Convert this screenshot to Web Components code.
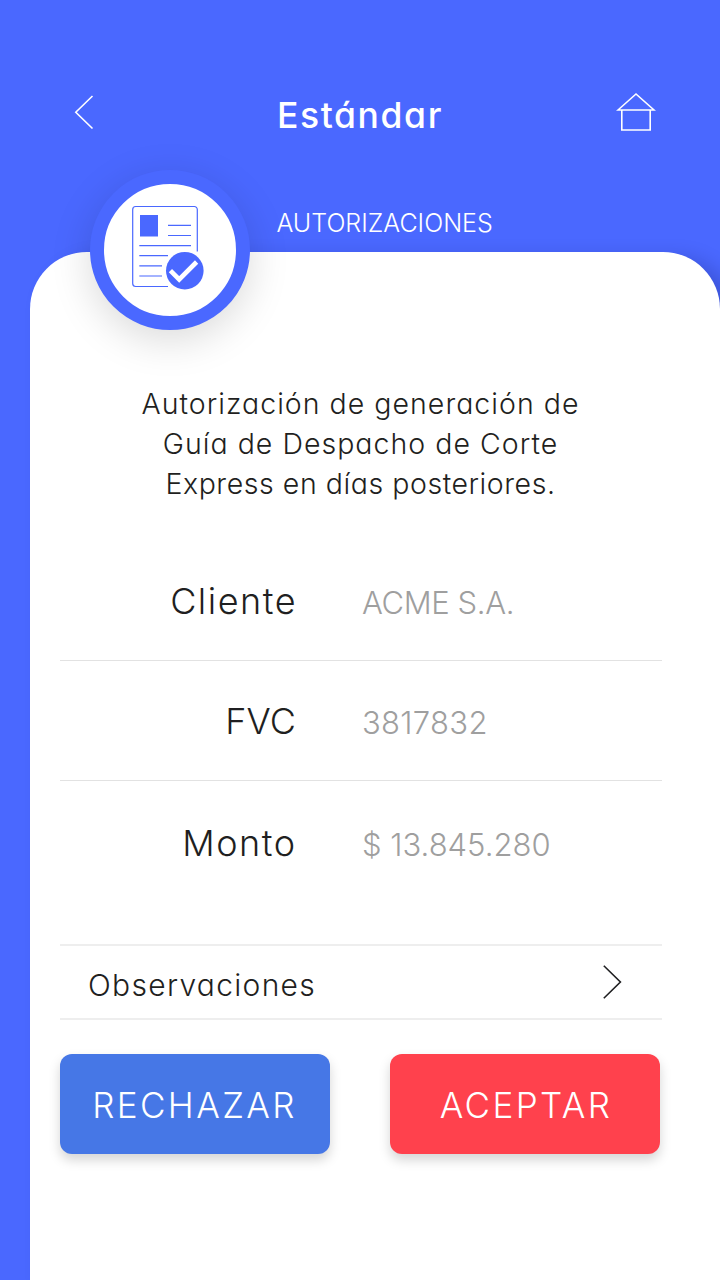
<!DOCTYPE html>
<html lang="es">
<head>
  <meta charset="utf-8">
  <title>Estándar</title>
  <style>
    :root {
      --color-brand: #4a68ff;
      --color-text: #1f1f21;
      --color-muted: #9f9f9f;
      --color-line: #e2e2e2;
    }

    body {
      margin: 0;
      background: var(--color-brand);
      color: var(--color-text);
      font-family: Inter, "Open Sans", sans-serif;
      font-weight: 300;
      font-feature-settings: "cv11";
    }
  </style>
</head>
<body>
  <auth-screen>
    <app-header slot="header" heading="Estándar"></app-header>
    <span slot="section">AUTORIZACIONES</span>
    <doc-badge slot="badge"></doc-badge>
    <auth-message>
      Autorización de generación de<br>
      Guía de Despacho de Corte<br>
      <span style="letter-spacing: 0.55px">Express en días posteriores.</span>
    </auth-message>
    <data-row label="Cliente" style="--value-spacing: -0.4px">ACME S.A.</data-row>
    <data-row label="FVC" style="--label-spacing: 0.1px; --label-shift: 0px; --value-spacing: 0.3px">3817832</data-row>
    <data-row label="Monto" style="--label-shift: -0.5px" last>$ 13.845.280</data-row>
    <nav-row>Observaciones</nav-row>
    <action-bar>
      <action-button>RECHAZAR</action-button>
      <action-button variant="accent">ACEPTAR</action-button>
    </action-bar>
  </auth-screen>

  <script>
    /** <auth-screen> page frame: header, section title, badge and white sheet */
    class AuthScreen extends HTMLElement {
      constructor() {
        super();
        this.attachShadow({ mode: 'open' }).innerHTML = `
          <style>
            :host {
              display: flex;
              flex-direction: column;
              height: 1280px;
              position: relative;
              overflow: hidden;
            }
            .section {
              height: 58px;
              padding-left: 276.5px;
              line-height: 58px;
              font-size: 25px;
              color: #fff;
            }
            .sheet {
              flex: 1;
              margin-left: 30px;
              padding: 132px 59px 0 30px;
              background: #fff;
              border-radius: 57px 57px 0 0;
              box-shadow: 14px 6px 20px rgba(0, 0, 60, 0.2);
            }
            .badge {
              position: absolute;
              left: 90px;
              top: 170px;
            }
          </style>
          <slot name="header"></slot>
          <div class="section"><slot name="section"></slot></div>
          <div class="sheet"><slot></slot></div>
          <div class="badge"><slot name="badge"></slot></div>
        `;
      }
    }

    /** <app-header heading="..."> back arrow, title and home icon */
    class AppHeader extends HTMLElement {
      constructor() {
        super();
        this.attachShadow({ mode: 'open' }).innerHTML = `
          <style>
            :host {
              display: grid;
              grid-template-columns: 40px 1fr 40px;
              align-items: start;
              box-sizing: border-box;
              height: 194px;
              padding: 92px 64px 0 74px;
              color: #fff;
            }
            svg {
              display: block;
              fill: none;
              stroke: currentColor;
              stroke-width: 1.6;
            }
            h1 {
              margin: 0;
              padding-right: 10px;
              font-size: 35.5px;
              font-weight: 500;
              line-height: 47px;
              letter-spacing: 1.6px;
              text-align: center;
            }
          </style>
          <svg width="40" height="40"><path d="M18.5 4 1.8 20.2 18.5 36.5"/></svg>
          <h1></h1>
          <svg width="40" height="40"><path d="M2 18 20 2 38 18ZM5.8 18V38H34.2V18"/></svg>
        `;
      }

      connectedCallback() {
        this.shadowRoot.querySelector('h1').textContent = this.getAttribute('heading');
      }
    }

    /** <doc-badge> round badge with the approved document icon */
    class DocBadge extends HTMLElement {
      constructor() {
        super();
        this.attachShadow({ mode: 'open' }).innerHTML = `
          <style>
            :host {
              display: block;
              box-sizing: border-box;
              width: 160px;
              height: 160px;
              border: 14px solid var(--color-brand);
              border-radius: 50%;
              background: #fff;
              box-shadow: 0 10px 40px rgba(0, 0, 0, 0.15);
              color: var(--color-brand);
            }
            svg {
              display: block;
              fill: none;
              stroke: currentColor;
            }
          </style>
          <svg width="132" height="132" viewBox="104 184 132 132">
            <path stroke-width="1.2" d="M197.3 251.5V209.5a3 3 0 0 0-3-3H135.7a3 3 0 0 0-3 3V283.5a3 3 0 0 0 3 3H168"/>
            <path fill="currentColor" stroke="none" d="M140 215h18v21.5h-18Z"/>
            <path stroke-width="1.2" d="M168 225.4h23M168 235.5h23M139.3 245.6H191M139.3 255.7H168M139.3 265.8H162M139.3 276H162"/>
            <circle cx="184.8" cy="270.7" r="18.8" fill="currentColor" stroke="none"/>
            <path stroke="#fff" stroke-width="4.6" d="m170.4 270.6 8.8 8.8 17.4-17.4"/>
          </svg>
        `;
      }
    }

    /** <auth-message> centred description */
    class AuthMessage extends HTMLElement {
      constructor() {
        super();
        this.attachShadow({ mode: 'open' }).innerHTML = `
          <style>
            :host {
              display: block;
              height: 157px;
              font-size: 28.5px;
              line-height: 40px;
              letter-spacing: 1.02px;
              text-align: center;
              white-space: nowrap;
            }
          </style>
          <slot></slot>
        `;
      }
    }

    /** <data-row label="..."> label and value, "last" drops the divider */
    class DataRow extends HTMLElement {
      constructor() {
        super();
        this.attachShadow({ mode: 'open' }).innerHTML = `
          <style>
            :host {
              display: grid;
              grid-template-columns: 236px 1fr;
              column-gap: 66px;
              align-items: baseline;
              align-content: start;
              box-sizing: border-box;
              width: 602px;
              height: 120px;
              padding-top: 40px;
              border-bottom: 1px solid var(--color-line);
            }
            :host([last]) {
              height: 163px;
              padding-top: 42px;
              border-bottom: 0;
            }
            .label {
              margin-right: var(--label-shift, -1px);
              font-size: 36px;
              line-height: 40px;
              letter-spacing: var(--label-spacing, 1.5px);
              text-align: right;
            }
            .value {
              font-size: 31px;
              line-height: 36px;
              letter-spacing: var(--value-spacing, 0);
              color: var(--color-muted);
            }
          </style>
          <span class="label"></span>
          <span class="value"><slot></slot></span>
        `;
      }

      connectedCallback() {
        this.shadowRoot.querySelector('.label').textContent = this.getAttribute('label');
      }
    }

    class NavRow extends HTMLElement {
      constructor() {
        super();
        this.attachShadow({ mode: 'open' }).innerHTML = `
          <style>
            :host {
              display: flex;
              justify-content: space-between;
              box-sizing: border-box;
              width: 602px;
              height: 76px;
              padding: 0 40px 0 28px;
              border-top: 2px solid #eee;
              border-bottom: 2px solid #eee;
              font-size: 30px;
              line-height: 79px;
              letter-spacing: 1.3px;
            }
            svg {
              margin-top: 18px;
              fill: none;
              stroke: currentColor;
              stroke-width: 1.6;
            }
          </style>
          <slot></slot>
          <svg width="20" height="36"><path d="M1.8 1.8 18.4 18 1.8 34.2"/></svg>
        `;
      }
    }

    /** <action-bar> holds the two buttons */
    class ActionBar extends HTMLElement {
      constructor() {
        super();
        this.attachShadow({ mode: 'open' }).innerHTML = `
          <style>
            :host {
              display: flex;
              gap: 60px;
              margin-top: 34px;
            }
          </style>
          <slot></slot>
        `;
      }
    }

    /** <action-button variant="accent"> */
    class ActionButton extends HTMLElement {
      constructor() {
        super();
        this.attachShadow({ mode: 'open' }).innerHTML = `
          <style>
            :host {
              display: block;
              width: 270px;
            }
            button {
              display: block;
              width: 100%;
              height: 100px;
              padding: 2px 1px 0 0;
              border: 0;
              border-radius: 12px;
              background: #4677e6;
              box-shadow: 0 6px 12px rgba(0, 0, 0, 0.17);
              color: #fff;
              font: inherit;
              font-feature-settings: inherit;
              font-size: 35px;
              letter-spacing: 2.4px;
            }
            :host([variant="accent"]) button {
              padding: 2px 0 0 2px;
              background: #ff414d;
            }
          </style>
          <button><slot></slot></button>
        `;
      }
    }

    customElements.define('auth-screen', AuthScreen);
    customElements.define('app-header', AppHeader);
    customElements.define('doc-badge', DocBadge);
    customElements.define('auth-message', AuthMessage);
    customElements.define('data-row', DataRow);
    customElements.define('nav-row', NavRow);
    customElements.define('action-bar', ActionBar);
    customElements.define('action-button', ActionButton);
  </script>
</body>
</html>
